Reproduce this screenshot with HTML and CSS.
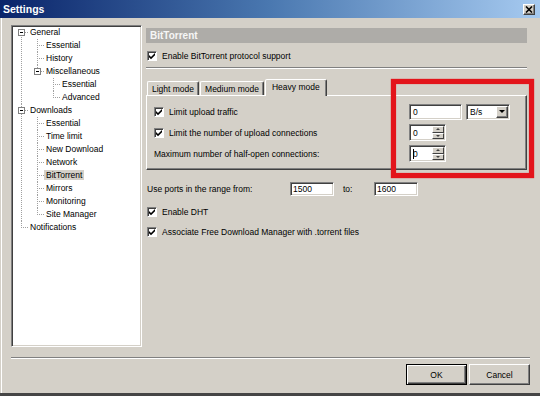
FILE: index.html
```html
<!DOCTYPE html>
<html>
<head>
<meta charset="utf-8">
<title>Settings</title>
<link rel="stylesheet" href="styles.css">
</head>
<body>
<div class="window">
  <div class="titlebar">
    <span class="title">Settings</span>
    <span class="close"><svg width="8" height="7" viewBox="0 0 8 7"><path d="M1 0.5 L7 6.5 M7 0.5 L1 6.5" stroke="#000" stroke-width="1.6" fill="none"/></svg></span>
  </div>
  <div class="main">
    <div class="tree">
      <ul>
        <li><span class="exp"></span>General
          <ul>
            <li>Essential</li>
            <li>History</li>
            <li><span class="exp"></span>Miscellaneous
              <ul>
                <li>Essential</li>
                <li>Advanced</li>
              </ul>
            </li>
          </ul>
        </li>
        <li><span class="exp"></span>Downloads
          <ul>
            <li>Essential</li>
            <li>Time limit</li>
            <li>New Download</li>
            <li>Network</li>
            <li><span class="sel">BitTorrent</span></li>
            <li>Mirrors</li>
            <li>Monitoring</li>
            <li>Site Manager</li>
          </ul>
        </li>
        <li>Notifications</li>
      </ul>
    </div>
    <div class="pane">
      <div class="header">BitTorrent</div>
      <div class="cbrow first"><span class="cb"><svg width="8" height="8" viewBox="0 0 8 8"><polygon points="1,3 3,5 7,1 7,3.2 3,7.2 1,5.2" fill="#000"/></svg></span>Enable BitTorrent protocol support</div>
      <div class="etch"></div>
      <div class="tabs">
        <span class="tab">Light mode</span>
        <span class="tab">Medium mode</span>
        <span class="tab active">Heavy mode</span>
      </div>
      <div class="panel">
        <div class="prow">
          <div class="plabel cbrow"><span class="cb"><svg width="8" height="8" viewBox="0 0 8 8"><polygon points="1,3 3,5 7,1 7,3.2 3,7.2 1,5.2" fill="#000"/></svg></span>Limit upload traffic</div>
          <div class="ctrl">
            <span class="field text">0</span>
            <span class="field combo">B/s<span class="dd"><span class="tri-down"></span></span></span>
          </div>
        </div>
        <div class="prow">
          <div class="plabel cbrow"><span class="cb"><svg width="8" height="8" viewBox="0 0 8 8"><polygon points="1,3 3,5 7,1 7,3.2 3,7.2 1,5.2" fill="#000"/></svg></span>Limit the number of upload connections</div>
          <div class="ctrl">
            <span class="field spin">0<span class="sbtns"><span class="sb"><span class="tri-up"></span></span><span class="sb"><span class="tri-dn"></span></span></span></span>
          </div>
        </div>
        <div class="prow">
          <div class="plabel">Maximum number of half-open connections:</div>
          <div class="ctrl">
            <span class="field spin"><span class="caret"></span>0<span class="sbtns"><span class="sb"><span class="tri-up"></span></span><span class="sb"><span class="tri-dn"></span></span></span></span>
          </div>
        </div>
      </div>
      <div class="ports">
        <span class="portlabel">Use ports in the range from:</span>
        <span class="field port">1500</span>
        <span class="to">to:</span>
        <span class="field port">1600</span>
      </div>
      <div class="cbrow dht"><span class="cb"><svg width="8" height="8" viewBox="0 0 8 8"><polygon points="1,3 3,5 7,1 7,3.2 3,7.2 1,5.2" fill="#000"/></svg></span>Enable DHT</div>
      <div class="cbrow assoc"><span class="cb"><svg width="8" height="8" viewBox="0 0 8 8"><polygon points="1,3 3,5 7,1 7,3.2 3,7.2 1,5.2" fill="#000"/></svg></span>Associate Free Download Manager with .torrent files</div>
    </div>
  </div>
  <div class="etch footer-sep"></div>
  <div class="buttons">
    <span class="btn default">OK</span>
    <span class="btn">Cancel</span>
  </div>
  <div class="highlight"></div>
</div>
</body>
</html>
```

FILE: styles.css
```css
* { box-sizing: border-box; }
html, body { margin: 0; padding: 0; background: #d4d0c8; }
body {
  font-family: "Liberation Sans", Arial, sans-serif;
  font-size: 8.5px;
  color: #000;
}
.window {
  position: relative;
  width: 540px;
  height: 396px;
  background: #d4d0c8;
  border-bottom: 3px solid #454545;
  box-shadow: inset 1px 0 #d4d0c8, inset 2px 0 #ffffff;
  display: flex;
  flex-direction: column;
  overflow: hidden;
}
.titlebar {
  height: 18px;
  flex: none;
  display: flex;
  align-items: center;
  padding: 0 5px 0 3px;
  background: linear-gradient(to right, #0a246a 0%, #4a78b0 50%, #a6caf0 100%);
  color: #fff;
  font-weight: bold;
  font-size: 10.5px;
}
.close {
  margin-left: auto;
  width: 12px;
  height: 11px;
  background: #d4d0c8;
  border: 1px solid;
  border-color: #fff #404040 #404040 #fff;
  box-shadow: inset -1px -1px #808080;
  display: flex;
  align-items: center;
  justify-content: center;
}
.main {
  display: flex;
  margin-top: 7px;
  padding-left: 11px;
  gap: 4px;
  flex: none;
}
.tree {
  width: 131px;
  height: 322px;
  flex: none;
  background: #fff;
  border: 1px solid;
  border-color: #808080 #fff #fff #808080;
  box-shadow: inset 1px 1px #404040, inset -1px -1px #d4d0c8;
  padding: 0 1px;
  overflow: hidden;
}
.tree ul { list-style: none; margin: 0; padding: 0; }
.tree li ul { margin-left: -1px; }
.tree li {
  position: relative;
  padding-left: 17px;
  line-height: 13px;
  white-space: nowrap;
}
.tree li::before {
  content: "";
  position: absolute;
  left: 8px;
  top: 6px;
  width: 7px;
  border-top: 1px dotted #a0a0a0;
}
.tree li::after {
  content: "";
  position: absolute;
  left: 8px;
  top: 0;
  bottom: 0;
  border-left: 1px dotted #a0a0a0;
}
.tree li:last-child::after { bottom: auto; height: 7px; }
.tree > ul > li:first-child::after { top: 6px; }
.exp {
  position: absolute;
  left: 5px;
  top: 3px;
  width: 7px;
  height: 7px;
  border: 1px solid #808080;
  background: #fff;
  z-index: 1;
}
.exp::after {
  content: "";
  position: absolute;
  left: 1px;
  top: 2px;
  width: 3px;
  height: 1px;
  background: #000;
}
.sel {
  background: #d4d0c8;
  padding: 0 2px;
  margin-left: -2px;
}
.pane {
  width: 381px;
  flex: none;
  display: flex;
  flex-direction: column;
}
.header {
  margin-top: 3px;
  height: 15px;
  line-height: 15px;
  background: #aeaca8;
  color: #f6f6f6;
  font-weight: bold;
  font-size: 10px;
  padding-left: 4px;
}
.cbrow {
  display: flex;
  align-items: center;
  gap: 5px;
  height: 11px;
  white-space: nowrap;
}
.cbrow.first { margin-top: 7px; padding-left: 1px; }
.cbrow.dht { margin-top: 10px; padding-left: 1px; }
.cbrow.assoc { margin-top: 9px; padding-left: 1px; }
.cb {
  width: 10px;
  height: 10px;
  flex: none;
  background: #fff;
  border: 1px solid;
  border-color: #808080 #fff #fff #808080;
  box-shadow: inset 1px 1px #404040;
  display: flex;
  align-items: center;
  justify-content: center;
}
.etch {
  height: 2px;
  border-top: 1px solid #808080;
  border-bottom: 1px solid #fff;
  flex: none;
}
.pane .etch { margin-top: 6px; }
.tabs {
  margin-top: 10px;
  height: 16px;
  display: flex;
  align-items: flex-end;
  padding-left: 1px;
}
.tab {
  height: 14px;
  padding: 0 4px;
  margin-right: 1px;
  border: 1px solid;
  border-bottom: none;
  border-color: #fff #404040 transparent #fff;
  box-shadow: inset -1px 0 #808080;
  border-radius: 2px 2px 0 0;
  display: flex;
  align-items: center;
  white-space: nowrap;
}
.tab.active {
  height: 17px;
  margin-bottom: -1px;
  padding: 0 6px 2px;
  background: #d4d0c8;
  position: relative;
  z-index: 1;
}
.panel {
  height: 75px;
  border: 1px solid;
  border-color: #fff #404040 #404040 #fff;
  box-shadow: inset -1px -1px #808080;
  padding: 7px 16px 7px 7px;
  display: flex;
  flex-direction: column;
  gap: 4px;
}
.prow {
  height: 17px;
  display: flex;
  align-items: center;
}
.plabel { flex: 1; white-space: nowrap; }
.ctrl {
  width: 101px;
  flex: none;
  display: flex;
  align-items: center;
  gap: 4px;
}
.field {
  background: #fff;
  border: 1px solid;
  border-color: #808080 #fff #fff #808080;
  box-shadow: inset 1px 1px #404040, inset -1px -1px #d4d0c8;
  display: flex;
  align-items: center;
  padding-left: 3px;
  flex: none;
}
.field.text { width: 53px; height: 16px; }
.field.combo { width: 44px; height: 16px; }
.dd {
  margin: 1px 1px 1px auto;
  width: 12px;
  height: 12px;
  background: #d4d0c8;
  border: 1px solid;
  border-color: #fff #404040 #404040 #fff;
  box-shadow: inset -1px -1px #808080;
  display: flex;
  align-items: center;
  justify-content: center;
}
.tri-down {
  width: 0;
  height: 0;
  border-left: 3px solid transparent;
  border-right: 3px solid transparent;
  border-top: 3px solid #000;
}
.field.spin { width: 37px; height: 17px; }
.caret {
  width: 1px;
  height: 10px;
  background: #000;
  margin-right: -1px;
}
.sbtns {
  margin: 1px 1px 1px auto;
  width: 12px;
  height: 13px;
  display: flex;
  flex-direction: column;
}
.sb {
  flex: 1;
  background: #d4d0c8;
  border: 1px solid;
  border-color: #fff #404040 #404040 #fff;
  display: flex;
  align-items: center;
  justify-content: center;
}
.tri-up {
  width: 0;
  height: 0;
  border-left: 2px solid transparent;
  border-right: 2px solid transparent;
  border-bottom: 2px solid #404040;
}
.tri-dn {
  width: 0;
  height: 0;
  border-left: 2px solid transparent;
  border-right: 2px solid transparent;
  border-top: 2px solid #404040;
}
.ports {
  margin-top: 12px;
  height: 14px;
  display: flex;
  align-items: center;
}
.portlabel { width: 144px; padding-left: 1px; white-space: nowrap; }
.field.port { width: 44px; height: 14px; padding-left: 2px; }
.to { width: 40px; padding-left: 9px; }
.footer-sep { margin: 10px 10px 0 11px; }
.buttons {
  margin-top: 5px;
  height: 21px;
  display: flex;
  justify-content: flex-end;
  gap: 2px;
  padding-right: 10px;
}
.btn {
  width: 61px;
  height: 21px;
  display: flex;
  align-items: center;
  justify-content: center;
  border: 1px solid;
  border-color: #fff #404040 #404040 #fff;
  box-shadow: inset -1px -1px #808080;
}
.btn.default {
  border-color: #000;
  box-shadow: inset 1px 1px #fff, inset -1px -1px #404040, inset -2px -2px #808080;
}
.highlight {
  position: absolute;
  left: 391px;
  top: 79px;
  width: 143px;
  height: 99px;
  border: 5px solid #e3141b;
  box-shadow: 0 0 1px #e3141b, inset 0 0 1px #e3141b;
  pointer-events: none;
}
```
